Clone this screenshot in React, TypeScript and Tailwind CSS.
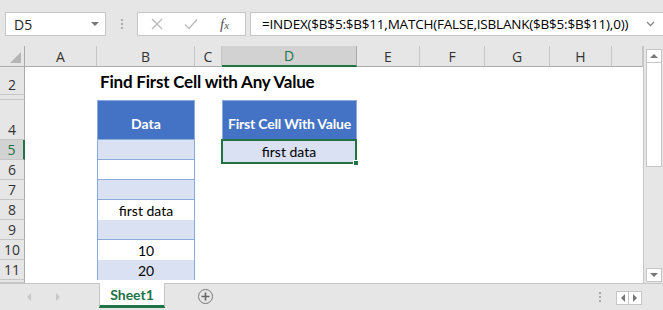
import React from "react";

const COLS = ["A", "B", "C", "D", "E", "F", "G", "H", ""];

// body rows: label, height class
const ROWS: { n: string; h: string }[] = [
  { n: "2", h: "h-[28px]" },
  { n: "", h: "h-[5px]" },
  { n: "4", h: "h-[40px]" },
  { n: "5", h: "h-[20px]" },
  { n: "6", h: "h-[20px]" },
  { n: "7", h: "h-[20px]" },
  { n: "8", h: "h-[20px]" },
  { n: "9", h: "h-[20px]" },
  { n: "10", h: "h-[20px]" },
  { n: "11", h: "h-[20px]" },
  { n: "", h: "h-[3px]" },
];

const DATA: Record<string, string> = {
  "5": "",
  "6": "",
  "7": "",
  "8": "first data",
  "9": "",
  "10": "10",
  "11": "20",
};

function Cell({ row, col }: { row: string; col: number }) {
  // col index: 0=A ... 8=I
  if (row === "2" && col === 1) {
    return (
      <div className="relative overflow-visible">
        <span className="absolute left-[3px] top-[6px] whitespace-nowrap font-['Lato'] text-[17px] font-bold leading-none text-black tracking-[-0.2px]">
          Find First Cell with Any Value
        </span>
      </div>
    );
  }
  if (row === "4" && col === 1) {
    return (
      <div className="flex items-center justify-center border border-[#8ea9db] bg-[#4472c4] pt-[6px] font-['Lato'] text-[14px] font-bold text-white">
        Data
      </div>
    );
  }
  if (row === "4" && col === 3) {
    return (
      <div className="flex items-center justify-center whitespace-nowrap border border-[#8ea9db] bg-[#4472c4] pt-[6px] font-['Lato'] text-[14px] font-bold tracking-[-0.2px] text-white">
        First Cell With Value
      </div>
    );
  }
  if (row === "5" && col === 3) {
    return (
      <div className="relative -ml-px -mt-px flex items-center justify-center border-2 border-[#217346] bg-[#d9e1f2] font-['Lato'] text-[14px] text-black">
        first data
        <span className="absolute -bottom-[4px] -right-[4px] h-[6px] w-[6px] border border-white bg-[#217346]" />
      </div>
    );
  }
  if (col === 1 && row in DATA) {
    const odd = ["5", "7", "9", "11"].includes(row);
    return (
      <div
        className={`flex items-center justify-center border-x border-b border-[#8ea9db] font-['Lato'] text-[14px] text-black ${
          odd ? "bg-[#d9e1f2]" : "bg-white"
        }`}
      >
        {DATA[row]}
      </div>
    );
  }
  return <div className="bg-white" />;
}

export default function App() {
  return (
    <div className="flex h-[310px] w-[663px] flex-col overflow-hidden bg-[#e6e6e6] font-['Open_Sans',sans-serif] text-[#222]">
      {/* formula bar */}
      <div className="flex h-[46px] items-start bg-[#e6e6e6] pl-[5px] pt-[12px]">
        <div className="flex h-[24px] w-[101px] items-center justify-between border border-[#c6c6c6] bg-white pl-[8px] pr-[6px] text-[14px]">
          <span>D5</span>
          <span className="h-0 w-0 border-x-[4px] border-t-[4px] border-x-transparent border-t-[#777]" />
        </div>
        <div className="flex h-[24px] w-[31px] flex-col items-center justify-center gap-[2px]">
          <span className="h-[2px] w-[2px] bg-[#aaa]" />
          <span className="h-[2px] w-[2px] bg-[#aaa]" />
          <span className="h-[2px] w-[2px] bg-[#aaa]" />
        </div>
        <div className="flex h-[24px] w-[109px] items-center border border-[#c6c6c6] bg-white">
          <svg width="12" height="12" viewBox="0 0 12 12" className="ml-[13px]">
            <path d="M1 1L11 11M11 1L1 11" stroke="#bbb" strokeWidth="1.4" />
          </svg>
          <svg width="14" height="12" viewBox="0 0 14 12" className="ml-[21px]">
            <path d="M1 6.5L5 10.5L13 1.5" stroke="#bbb" strokeWidth="1.4" fill="none" />
          </svg>
          <span className="ml-[22px] font-['Liberation_Serif',serif] text-[15px] italic text-[#555]">
            f<span className="text-[11px]">x</span>
          </span>
        </div>
        <div className="ml-[4px] flex h-[24px] flex-1 items-center justify-between border border-r-0 border-[#c6c6c6] bg-white pl-[11px] pr-[8px] text-[13.5px] tracking-[-0.2px] text-black">
          <span className="whitespace-nowrap">=INDEX($B$5:$B$11,MATCH(FALSE,ISBLANK($B$5:$B$11),0))</span>
          <svg width="9" height="6" viewBox="0 0 9 6">
            <path d="M1 1L4.5 4.5L8 1" stroke="#888" strokeWidth="1.3" fill="none" />
          </svg>
        </div>
      </div>

      {/* sheet + scrollbar */}
      <div className="flex h-[237px]">
        <div className="w-[643px] overflow-hidden bg-white">
          <div className="grid grid-cols-[25px_72px_98px_27px_135px_63px_65px_65px_62px_31px]">
            {/* header row */}
            <div className="relative h-[21px] border-b border-r border-[#ababab] bg-[#e6e6e6]">
              <span className="absolute bottom-[3px] right-[3px] h-0 w-0 border-b-[11px] border-l-[11px] border-b-[#b5b5b5] border-l-transparent" />
            </div>
            {COLS.map((c, i) => (
              <div
                key={"h" + i}
                className={`flex h-[21px] items-center justify-center border-r text-[14px] ${
                  i === 3
                    ? "border-b-2 border-r-[#ababab] border-b-[#217346] bg-[#d2d2d2] text-[#217346]"
                    : "border-b border-[#c6c6c6] border-b-[#ababab] bg-[#e6e6e6] text-[#333]"
                }`}
              >
                {c}
              </div>
            ))}
            {ROWS.map((r, ri) => (
              <React.Fragment key={"r" + ri}>
                <div
                  className={`flex items-end justify-center border-b border-[#c6c6c6] text-[14px] leading-[19px] ${r.h} ${
                    r.n === "5"
                      ? "border-r-2 border-r-[#217346] bg-[#d2d2d2] text-[#217346]"
                      : "border-r border-r-[#ababab] bg-[#e6e6e6] text-[#333]"
                  }`}
                >
                  {r.n}
                </div>
                {COLS.map((_, ci) => (
                  <div key={ci} className={`grid ${r.h}`}>
                    <Cell row={r.n} col={ci} />
                  </div>
                ))}
              </React.Fragment>
            ))}
          </div>
        </div>
        <div className="flex w-[20px] flex-col items-center border-l border-[#c6c6c6] bg-[#e6e6e6] pt-[3px]">
          <div className="flex h-[14px] w-[16px] items-center justify-center border border-[#c6c6c6] bg-white">
            <span className="h-0 w-0 border-x-[4px] border-b-[4px] border-x-transparent border-b-[#777]" />
          </div>
          <div className="h-[104px] w-[16px] border border-t-0 border-[#c6c6c6] bg-white" />
          <div className="flex-1" />
          <div className="mb-[1px] flex h-[14px] w-[16px] items-center justify-center border border-[#c6c6c6] bg-white">
            <span className="h-0 w-0 border-x-[4px] border-t-[4px] border-x-transparent border-t-[#777]" />
          </div>
        </div>
      </div>

      {/* sheet tabs */}
      <div className="flex h-[27px] items-start border-t border-[#c6c6c6] bg-[#e6e6e6]">
        <div className="flex h-[25px] w-[99px] items-center pl-[27px]">
          <span className="h-0 w-0 border-y-[4px] border-r-[4px] border-y-transparent border-r-[#c8c8c8]" />
          <span className="ml-[25px] h-0 w-0 border-y-[4px] border-l-[4px] border-y-transparent border-l-[#c8c8c8]" />
        </div>
        <div className="-mt-px flex h-[25px] w-[66px] items-center justify-center border-x border-b-[3px] border-x-[#c6c6c6] border-b-[#217346] bg-white font-['Lato'] text-[14px] font-bold text-[#217346]">
          Sheet1
        </div>
        <div className="ml-[33px] mt-[5px] flex h-[15px] w-[15px] items-center justify-center rounded-full border-[1.5px] border-[#777] text-[#666]">
          <svg width="9" height="9" viewBox="0 0 9 9">
            <path d="M4.5 0.5V8.5M0.5 4.5H8.5" stroke="#666" strokeWidth="1.6" />
          </svg>
        </div>
        <div className="flex-1" />
        <div className="mt-[8px] flex flex-col gap-[2px]">
          <span className="h-[2px] w-[2px] bg-[#aaa]" />
          <span className="h-[2px] w-[2px] bg-[#aaa]" />
          <span className="h-[2px] w-[2px] bg-[#aaa]" />
        </div>
        <div className="ml-[15px] mr-[21px] mt-[7px] flex h-[14px] border border-[#c6c6c6] bg-white">
          <div className="flex w-[12px] items-center justify-center border-r border-[#c6c6c6]">
            <span className="h-0 w-0 border-y-[4px] border-r-[4px] border-y-transparent border-r-[#777]" />
          </div>
          <div className="flex w-[12px] items-center justify-center">
            <span className="h-0 w-0 border-y-[4px] border-l-[4px] border-y-transparent border-l-[#777]" />
          </div>
        </div>
      </div>
    </div>
  );
}
